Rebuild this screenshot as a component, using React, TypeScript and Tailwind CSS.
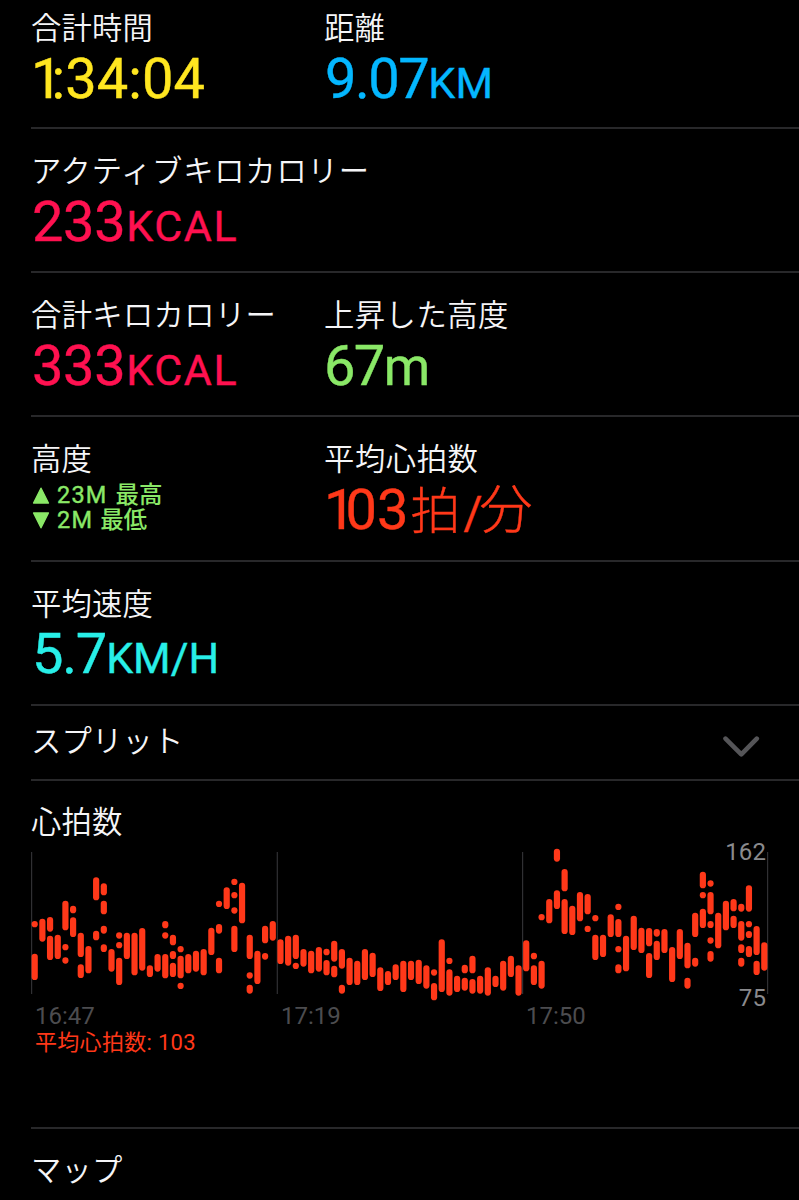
import React from "react";

type Segment = [number, number];

const PITCH = 7.68;
const FIRST_X = 3.7;

// Every entry is one sampling column: [top, bottom] ranges in thirds of a pixel.
const samples: Segment[][] = [
  [[243, 262], [341, 420]],
  [[236, 305]],
  [[231, 275], [287, 360]],
  [[284, 357]],
  [[182, 271], [312, 331], [352, 371]],
  [[197, 220], [232, 291]],
  [[278, 351], [373, 414]],
  [[318, 400]],
  [[112, 181], [272, 301]],
  [[130, 166], [182, 223], [257, 281], [313, 336]],
  [[327, 395]],
  [[277, 296], [306, 325], [353, 435]],
  [[278, 357]],
  [[278, 406]],
  [[264, 392]],
  [[376, 411]],
  [[342, 395]],
  [[243, 265], [277, 296], [342, 415]],
  [[284, 316], [333, 357], [368, 411]],
  [[318, 337], [347, 415], [428, 447]],
  [[342, 400]],
  [[332, 395]],
  [[327, 406]],
  [[263, 345]],
  [[182, 201], [252, 281], [353, 400]],
  [[142, 207]],
  [[116, 135], [156, 175], [202, 221], [257, 336]],
  [[128, 250]],
  [[284, 357], [397, 416], [434, 461]],
  [[332, 432]],
  [[257, 310], [339, 359]],
  [[243, 302]],
  [[298, 372]],
  [[287, 377]],
  [[284, 357], [368, 387]],
  [[327, 380]],
  [[332, 400]],
  [[321, 395]],
  [[326, 346], [360, 406]],
  [[302, 365], [377, 412]],
  [[327, 386], [434, 461]],
  [[353, 435]],
  [[362, 435]],
  [[327, 420]],
  [[338, 411]],
  [[382, 453]],
  [[393, 435]],
  [[373, 420]],
  [[362, 456]],
  [[362, 420]],
  [[359, 432]],
  [[376, 446]],
  [[388, 407], [429, 481]],
  [[298, 456]],
  [[353, 372], [388, 467]],
  [[407, 456]],
  [[374, 400], [413, 452]],
  [[347, 400], [417, 461]],
  [[407, 461]],
  [[382, 467]],
  [[407, 441]],
  [[362, 452]],
  [[347, 411]],
  [[376, 467]],
  [[301, 394]],
  [[338, 358], [376, 435]],
  [[222, 241], [362, 446]],
  [[177, 250]],
  [[26, 65], [151, 207]],
  [[87, 154], [177, 282]],
  [[197, 285]],
  [[156, 244]],
  [[162, 223], [257, 276]],
  [[225, 244], [284, 360]],
  [[284, 351]],
  [[223, 291]],
  [[191, 210], [237, 291], [318, 337], [373, 400]],
  [[287, 394]],
  [[227, 330]],
  [[263, 339]],
  [[264, 319], [339, 414]],
  [[267, 290], [302, 360]],
  [[267, 339]],
  [[321, 426]],
  [[267, 357]],
  [[308, 385], [413, 446]],
  [[218, 291], [353, 380]],
  [[95, 145], [156, 175], [206, 264]],
  [[121, 140], [156, 223], [243, 264], [292, 311], [333, 365]],
  [[218, 325]],
  [[182, 271]],
  [[177, 214], [227, 264]],
  [[191, 215], [243, 302], [313, 339], [353, 380]],
  [[136, 215], [243, 262], [273, 294], [318, 351]],
  [[258, 345], [362, 405]],
  [[307, 392]],
];

function HeartRateChart() {
  return (
    <svg className="block h-[164px] w-[768px]" viewBox="0 0 768 164">
      {[0.5, 246.2, 491.5, 736.5].map((x) => (
        <rect key={x} x={x - 0.5} y={12} width={1.2} height={142} fill="#303033" />
      ))}
      {samples.map((column, i) =>
        column.map(([top, bottom]) => (
          <rect
            key={`${i}-${top}`}
            x={FIRST_X + i * PITCH - 3.1}
            y={top / 3}
            width={6.2}
            height={(bottom - top) / 3}
            rx={3.1}
            fill="#ff3819"
          />
        )),
      )}
    </svg>
  );
}

function Label({ className = "tracking-[0.2px]", children }: { className?: string; children: React.ReactNode }) {
  return (
    <div className={`h-[44px] text-[30.3px] leading-[44px] font-[350] whitespace-nowrap text-[#f5f5f7] ${className}`}>
      {children}
    </div>
  );
}

function Value({ className, children }: { className: string; children: React.ReactNode }) {
  return (
    <div
      className={`flex h-[60px] items-baseline pl-[1px] font-[Roboto,'Noto_Sans_CJK_JP',sans-serif] text-[56px] leading-[60px] whitespace-nowrap [-webkit-text-stroke:0.4px_currentColor] ${className}`}
    >
      {children}
    </div>
  );
}

function Row({ className = "h-[144px] pt-[18px]", children }: { className?: string; children: React.ReactNode }) {
  return (
    <section className={`flex shrink-0 border-b-2 border-[#28282a] ${className}`}>{children}</section>
  );
}

export default function App() {
  return (
    <main className="flex h-[1200px] w-[799px] flex-col overflow-hidden bg-black pl-[31px] font-['Noto_Sans_CJK_JP',sans-serif]">
      <div className="-mt-[15px] flex shrink-0 flex-col">
        <Row className="h-[144px] pt-[19px]">
          <div className="w-[293px]">
            <Label>合計時間</Label>
            <Value className="mt-px text-[#ffe620]">
              <span className="-ml-px tracking-[-11px]">1</span>
              <span className="tracking-[0.1px]">:34:04</span>
            </Value>
          </div>
          <div>
            <Label>距離</Label>
            <Value className="mt-px text-[#04b7ff]">
              <span className="tracking-[-1.5px]">9.07</span>
              <span className="text-[43px] tracking-[0.4px]">KM</span>
            </Value>
          </div>
        </Row>
        <Row>
          <div>
            <Label className="tracking-[0.8px]">アクティブキロカロリー</Label>
            <Value className="mt-px text-[#ff1150]">
              <span className="tracking-[-0.4px]">233</span>
              <span className="ml-px text-[43px] tracking-[1.6px]">KCAL</span>
            </Value>
          </div>
        </Row>
        <Row>
          <div className="w-[293px]">
            <Label className="tracking-[0.35px]">合計キロカロリー</Label>
            <Value className="mt-px text-[#ff1150]">
              <span className="tracking-[-0.4px]">333</span>
              <span className="ml-px text-[43px] tracking-[1.6px]">KCAL</span>
            </Value>
          </div>
          <div>
            <Label className="tracking-[0.5px]">上昇した高度</Label>
            <Value className="mt-px text-[#8ae867]">
              <span className="-ml-px tracking-[-1.6px]">67</span>
              <span className="text-[53px]">m</span>
            </Value>
          </div>
        </Row>
        <Row className="h-[145px] pt-[18px]">
          <div className="w-[293px]">
            <Label>高度</Label>
            <div className="flex flex-col pt-[4px] pl-px font-[Roboto,'Noto_Sans_CJK_JP',sans-serif] text-[23.5px] leading-[25px] font-medium text-[#8ae867]">
              <div className="flex h-[25px] items-center">
                <svg className="mr-[7px] h-[17px] w-[18px]" viewBox="0 0 18 17"><path d="M9 1.2 16.4 16H1.6Z" fill="currentColor" stroke="currentColor" strokeWidth="1.4" strokeLinejoin="round" /></svg>
                <span className="mr-[8px] font-normal tracking-[1.2px] [-webkit-text-stroke:0.4px_currentColor]">23M</span>
                <span>最高</span>
              </div>
              <div className="flex h-[25px] items-center">
                <svg className="mr-[7px] h-[17px] w-[18px]" viewBox="0 0 18 17"><path d="M9 15.8 16.4 1H1.6Z" fill="currentColor" stroke="currentColor" strokeWidth="1.4" strokeLinejoin="round" /></svg>
                <span className="mr-[7px] font-normal tracking-[1.2px] [-webkit-text-stroke:0.4px_currentColor]">2M</span>
                <span>最低</span>
              </div>
            </div>
          </div>
          <div>
            <Label className="tracking-[0.6px]">平均心拍数</Label>
            <Value className="mt-px text-[#ff3819]">
              <span className="-ml-px tracking-[-10px]">1</span>
              <span>03</span>
              <span className="ml-[2px] text-[50px] font-light">拍</span>
              <span className="ml-[3px] text-[46px]">/</span>
              <span className="-ml-[3px] text-[53px] font-light">分</span>
            </Value>
          </div>
        </Row>
        <Row>
          <div>
            <Label>平均速度</Label>
            <Value className="text-[#28efe8]">
              <span className="tracking-[-1.2px]">5.7</span>
              <span className="text-[43px]">KM/H</span>
            </Value>
          </div>
        </Row>
      </div>
      <section className="flex h-[75px] shrink-0 items-start justify-between border-b-2 border-[#28282a] pt-[11px] pr-[39px]">
        <Label>スプリット</Label>
        <svg className="mt-[18px] h-[24px] w-[38px]" viewBox="0 0 38 24" fill="none" stroke="#555558" strokeWidth="4.6" strokeLinecap="round" strokeLinejoin="round">
          <path d="M3.5 3.6 19.3 19.4 34.8 3.6" />
        </svg>
      </section>
      <section className="h-[348px] shrink-0 border-b-2 border-[#28282a] pt-[17px]">
        <Label>心拍数</Label>
        <div className="relative -mt-[2px] h-[164px]">
          <HeartRateChart />
          <div className="absolute top-0 right-[33px] flex h-[170px] flex-col justify-between text-right font-[Roboto] text-[24px] leading-[24px] tracking-[0.1px] text-[#8a8a8d]">
            <span>162</span>
            <span>75</span>
          </div>
        </div>
        <div className="flex pl-[4px] font-[Roboto] text-[24px] leading-[24px] text-[#4c4c4f]">
          <span className="w-[246px]">16:47</span>
          <span className="w-[245px]">17:19</span>
          <span>17:50</span>
        </div>
        <div className="pt-px pl-[4px] font-[Roboto,'Noto_Sans_CJK_JP',sans-serif] text-[22px] leading-[28px] tracking-[0.3px] text-[#ff3819]">平均心拍数: 103</div>
      </section>
      <section className="pt-[17px]">
        <Label>マップ</Label>
      </section>
    </main>
  );
}
